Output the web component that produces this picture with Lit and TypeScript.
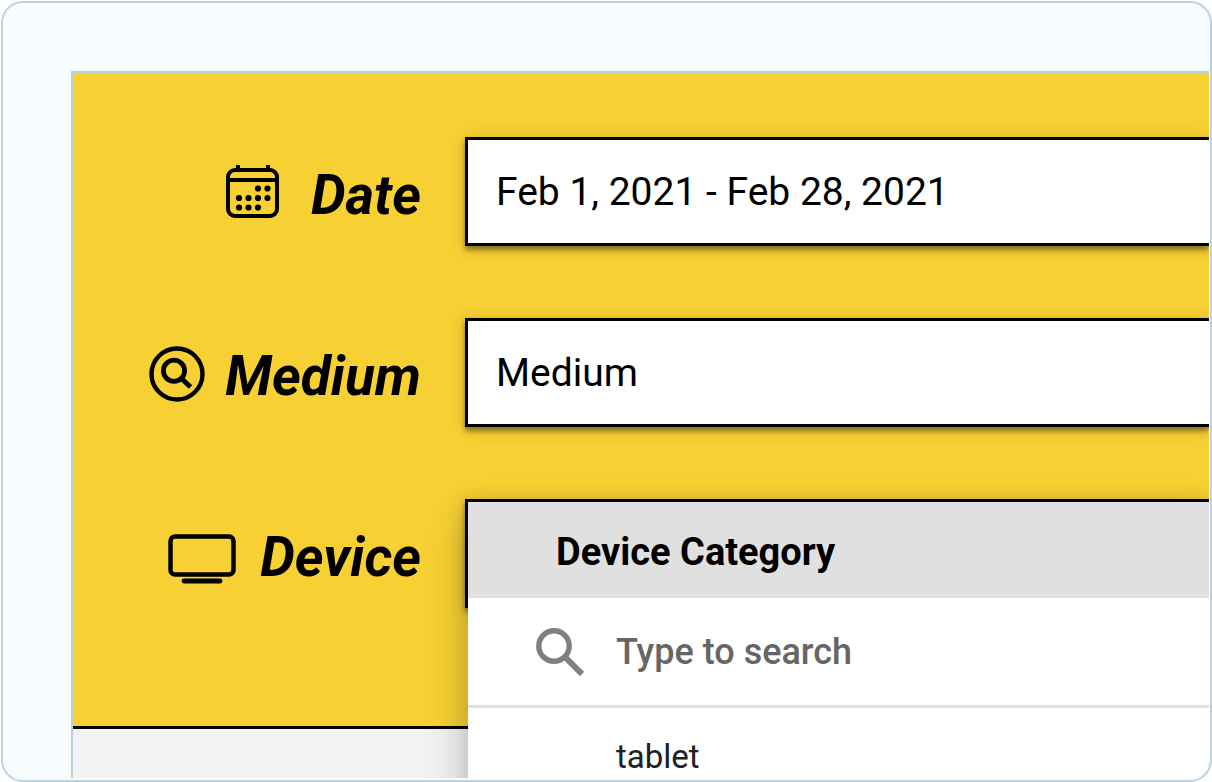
import { LitElement, html, css, svg } from "lit";
import { customElement, property, state } from "lit/decorators.js";

const calendarIcon = svg`
  <svg width="66" height="62" viewBox="0 0 66 62" aria-hidden="true">
    <g fill="none" stroke="#000" stroke-width="4">
      <rect x="3" y="6" width="49" height="46" rx="7"></rect>
      <path d="M3 16H52M13 1V6M43 1V6"></path>
    </g>
    <g fill="#000">
      <circle cx="33" cy="24.500" r="3.100"></circle>
      <circle cx="42.500" cy="24.500" r="3.100"></circle>
      <circle cx="14" cy="34" r="3.100"></circle>
      <circle cx="23.500" cy="34" r="3.100"></circle>
      <circle cx="33" cy="34" r="3.100"></circle>
      <circle cx="42.500" cy="34" r="3.100"></circle>
      <circle cx="14" cy="43.500" r="3.100"></circle>
      <circle cx="23.500" cy="43.500" r="3.100"></circle>
      <circle cx="33" cy="43.500" r="3.100"></circle>
    </g>
  </svg>`;

const magnifierIcon = svg`
  <svg width="56" height="60" viewBox="0 0 56 60" aria-hidden="true">
    <g fill="none" stroke="#000">
      <circle cx="28" cy="28" r="25.500" stroke-width="4.400"></circle>
      <circle cx="25" cy="24.700" r="10.600" stroke-width="4.800"></circle>
      <path d="M32 32L41.500 41" stroke-width="5"></path>
    </g>
  </svg>`;

const screenIcon = svg`
  <svg width="72" height="56" viewBox="0 0 72 56" aria-hidden="true">
    <rect x="2.500" y="7.500" width="63" height="38" rx="4.500" fill="none" stroke="#000" stroke-width="4.500"></rect>
    <path d="M16 52H52" stroke="#000" stroke-width="4.800" stroke-linecap="round"></path>
  </svg>`;

const searchIcon = svg`
  <svg width="48" height="48" viewBox="0 0 48 48" aria-hidden="true">
    <g fill="none" stroke="#808080">
      <circle cx="18" cy="18" r="15.200" stroke-width="5.400"></circle>
      <path d="M29 29L46 46" stroke-width="6"></path>
    </g>
  </svg>`;

@customElement("dimension-menu")
export class DimensionMenu extends LitElement {
  @property() heading = "";
  @property({ attribute: false }) options: string[] = [];
  @state() private query = "";

  static styles = css`
    :host {
      display: block;
      background: #fff;
      box-shadow: 0 16px 36px rgba(0, 0, 0, 0.3);
      color: #212121;
    }
    .heading {
      margin: 0;
      padding: 26px 88px 22px;
      background: #e0e0e0;
      color: #000;
      font-size: 38px;
      line-height: 48px;
      font-weight: 700;
    }
    .search {
      display: flex;
      align-items: center;
      gap: 32px;
      padding: 0 68px;
      height: 107px;
      border-bottom: 3px solid #e0e0e0;
    }
    .search svg {
      flex: none;
    }
    .query {
      flex: 1;
      min-width: 0;
      border: 0;
      padding: 0;
      outline: 0;
      background: transparent;
      font: inherit;
      font-size: 36px;
      font-weight: 500;
      color: #212121;
    }
    .query::placeholder {
      color: #666;
      opacity: 1;
    }
    .options {
      list-style: none;
      margin: 0;
      padding: 24px 0;
    }
    .option {
      display: block;
      width: 100%;
      border: 0;
      padding: 0 148px;
      background: transparent;
      text-align: left;
      font: inherit;
      font-size: 33px;
      line-height: 50px;
      color: #212121;
    }
  `;

  private onInput(e: Event) {
    this.query = (e.target as HTMLInputElement).value;
  }

  render() {
    const shown = this.options.filter((o) => o.includes(this.query.toLowerCase()));
    return html`
      <h2 class="heading">${this.heading}</h2>
      <label class="search">
        ${searchIcon}
        <input class="query" type="text" placeholder="Type to search" aria-label="Type to search" @input=${this.onInput} />
      </label>
      <ul class="options">
        ${shown.map((o) => html`<li><button class="option" type="button">${o}</button></li>`)}
      </ul>
    `;
  }
}

@customElement("app-root")
export class AppRoot extends LitElement {
  static styles = css`
    :host {
      display: flex;
      box-sizing: border-box;
      height: 100vh;
      padding: 1px 0 0 1px;
      background: #fff;
      font-family: Roboto, sans-serif;
      color: #000;
    }
    .frame {
      flex: 1;
      min-width: 0;
      display: flex;
      box-sizing: border-box;
      padding: 68px 1px 2px 68px;
      border: 2px solid #bcd3df;
      border-radius: 22px;
      background: #f7fcff;
      overflow: hidden;
    }
    .report {
      flex: 1;
      min-width: 0;
      display: flex;
      flex-direction: column;
      border: solid #b9d0d6;
      border-width: 2px 0 0 2px;
      border-bottom-right-radius: 18px;
      background: #f2f2f2;
      overflow: hidden;
    }
    .filters {
      display: grid;
      grid-template-columns: 348px minmax(0, 1fr);
      column-gap: 44px;
      row-gap: 72px;
      padding: 64px 0 118px;
      background: #f7d033;
      border-bottom: 3px solid #000;
    }
    .label {
      display: flex;
      align-items: center;
      justify-content: flex-end;
      gap: 20px;
      padding-top: 6px;
      font-size: 55px;
      line-height: 64px;
      font-weight: 700;
      font-style: italic;
    }
    .label svg {
      flex: none;
    }
    .slot {
      position: relative;
    }
    .field {
      display: block;
      box-sizing: border-box;
      width: 100%;
      height: 109px;
      padding: 0 28px;
      border: solid #000;
      border-width: 3px 0 3px 3px;
      border-radius: 0;
      background: #fff;
      box-shadow: 0 4px 5px rgba(0, 0, 0, 0.4), 0 2px 16px rgba(0, 0, 0, 0.15);
      text-align: left;
      font: inherit;
      font-size: 39px;
      color: #000;
    }
    .menu {
      position: absolute;
      top: 3px;
      left: 3px;
      right: 0;
    }
  `;

  render() {
    return html`
      <main class="frame">
        <div class="report">
          <section class="filters">
            <label class="label" for="date">${calendarIcon}<span>Date</span></label>
            <div class="slot">
              <button class="field" id="date" type="button">Feb 1, 2021 - Feb 28, 2021</button>
            </div>
            <label class="label" for="medium">${magnifierIcon}<span>Medium</span></label>
            <div class="slot">
              <button class="field" id="medium" type="button">Medium</button>
            </div>
            <label class="label" for="device">${screenIcon}<span>Device</span></label>
            <div class="slot">
              <button class="field" id="device" type="button" aria-expanded="true"></button>
              <dimension-menu class="menu" heading="Device Category" .options=${["tablet"]}></dimension-menu>
            </div>
          </section>
        </div>
      </main>
    `;
  }
}
